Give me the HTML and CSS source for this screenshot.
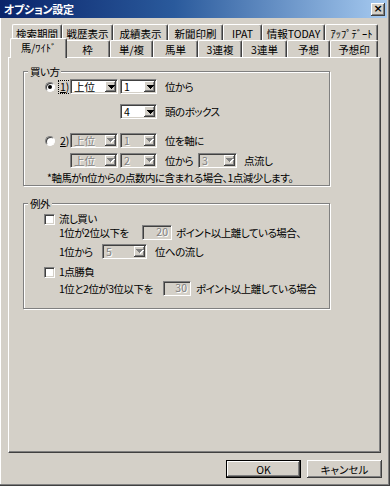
FILE: index.html
```html
<!DOCTYPE html>
<html lang="ja">
<head>
<meta charset="utf-8">
<title>オプション設定</title>
<link rel="stylesheet" href="styles.css">
</head>
<body>
<div class="window">
  <div class="titlebar">
    <span class="title">オプション設定</span>
    <span class="close">×</span>
  </div>

  <div class="tabs">
    <div class="tabrow back">
      <div class="tab">検索期間</div>
      <div class="tab">戦歴表示</div>
      <div class="tab">成績表示</div>
      <div class="tab">新聞印刷</div>
      <div class="tab">IPAT</div>
      <div class="tab">情報TODAY</div>
      <div class="tab">ｱｯﾌﾟﾃﾞｰﾄ</div>
    </div>
    <div class="tabrow front">
      <div class="tab sel">馬/ﾜｲﾄﾞ</div>
      <div class="tab">枠</div>
      <div class="tab">単/複</div>
      <div class="tab">馬単</div>
      <div class="tab">3連複</div>
      <div class="tab">3連単</div>
      <div class="tab">予想</div>
      <div class="tab">予想印</div>
    </div>
  </div>

  <div class="panel">
    <div class="group g1">
      <span class="legend">買い方</span>

      <div class="row r1">
        <div class="opt"><span class="radio on"></span><span class="olabel focus"><u>1</u>)</span></div>
        <span class="combo ca"><span class="val">上位</span><span class="dd"><svg width="7" height="4" viewBox="0 0 7 4" shape-rendering="crispEdges"><path d="M0 0h7v1h-1v1h-1v1h-1v1h-1v-1h-1v-1h-1v-1h-1z"/></svg></span></span>
        <span class="combo cb"><span class="val">1</span><span class="dd"><svg width="7" height="4" viewBox="0 0 7 4" shape-rendering="crispEdges"><path d="M0 0h7v1h-1v1h-1v1h-1v1h-1v-1h-1v-1h-1v-1h-1z"/></svg></span></span>
        <span class="txt after">位から</span>
      </div>

      <div class="row r2">
        <span class="combo cb"><span class="val">4</span><span class="dd"><svg width="7" height="4" viewBox="0 0 7 4" shape-rendering="crispEdges"><path d="M0 0h7v1h-1v1h-1v1h-1v1h-1v-1h-1v-1h-1v-1h-1z"/></svg></span></span>
        <span class="txt after">頭のボックス</span>
      </div>

      <div class="row r3">
        <div class="opt"><span class="radio"></span><span class="olabel"><u>2</u>)</span></div>
        <span class="combo ca dis"><span class="val">上位</span><span class="dd"><svg width="8" height="5" viewBox="0 0 8 5" shape-rendering="crispEdges"><path class="hl" d="M1 1h7v1h-1v1h-1v1h-1v1h-1v-1h-1v-1h-1v-1h-1z"/><path d="M0 0h7v1h-1v1h-1v1h-1v1h-1v-1h-1v-1h-1v-1h-1z"/></svg></span></span>
        <span class="combo cb dis"><span class="val">1</span><span class="dd"><svg width="8" height="5" viewBox="0 0 8 5" shape-rendering="crispEdges"><path class="hl" d="M1 1h7v1h-1v1h-1v1h-1v1h-1v-1h-1v-1h-1v-1h-1z"/><path d="M0 0h7v1h-1v1h-1v1h-1v1h-1v-1h-1v-1h-1v-1h-1z"/></svg></span></span>
        <span class="txt after">位を軸に</span>
      </div>

      <div class="row r4">
        <span class="combo ca dis"><span class="val">上位</span><span class="dd"><svg width="8" height="5" viewBox="0 0 8 5" shape-rendering="crispEdges"><path class="hl" d="M1 1h7v1h-1v1h-1v1h-1v1h-1v-1h-1v-1h-1v-1h-1z"/><path d="M0 0h7v1h-1v1h-1v1h-1v1h-1v-1h-1v-1h-1v-1h-1z"/></svg></span></span>
        <span class="combo cb dis"><span class="val">2</span><span class="dd"><svg width="8" height="5" viewBox="0 0 8 5" shape-rendering="crispEdges"><path class="hl" d="M1 1h7v1h-1v1h-1v1h-1v1h-1v-1h-1v-1h-1v-1h-1z"/><path d="M0 0h7v1h-1v1h-1v1h-1v1h-1v-1h-1v-1h-1v-1h-1z"/></svg></span></span>
        <span class="txt after w33">位から</span>
        <span class="combo cc dis"><span class="val">3</span><span class="dd"><svg width="8" height="5" viewBox="0 0 8 5" shape-rendering="crispEdges"><path class="hl" d="M1 1h7v1h-1v1h-1v1h-1v1h-1v-1h-1v-1h-1v-1h-1z"/><path d="M0 0h7v1h-1v1h-1v1h-1v1h-1v-1h-1v-1h-1v-1h-1z"/></svg></span></span>
        <span class="txt after7">点流し</span>
      </div>

      <div class="note">*軸馬がn位からの点数内に含まれる場合、1点減少します。</div>
    </div>

    <div class="group g2">
      <span class="legend">例外</span>

      <div class="crow c1">
        <span class="check"></span><span class="txt clabel">流し買い</span>
      </div>
      <div class="line l2">
        <span class="lab w83">1位が2位以下を</span>
        <span class="edit e30">20</span>
        <span class="txt after4">ポイント以上離している場合、</span>
      </div>
      <div class="line l3">
        <span class="lab w43">1位から</span>
        <span class="combo cd dis"><span class="val">5</span><span class="dd"><svg width="8" height="5" viewBox="0 0 8 5" shape-rendering="crispEdges"><path class="hl" d="M1 1h7v1h-1v1h-1v1h-1v1h-1v-1h-1v-1h-1v-1h-1z"/><path d="M0 0h7v1h-1v1h-1v1h-1v1h-1v-1h-1v-1h-1v-1h-1z"/></svg></span></span>
        <span class="txt after">位への流し</span>
      </div>
      <div class="crow c2">
        <span class="check"></span><span class="txt clabel">1点勝負</span>
      </div>
      <div class="line l5">
        <span class="lab w104">1位と2位が3位以下を</span>
        <span class="edit e28">30</span>
        <span class="txt after5">ポイント以上離している場合</span>
      </div>
    </div>
  </div>

  <div class="buttons">
    <div class="btn default">OK</div>
    <div class="btn">キャンセル</div>
  </div>
</div>
</body>
</html>
```

FILE: styles.css
```css
* { box-sizing: border-box; }
html, body { margin: 0; padding: 0; background: #d4d0c8; }
body {
  font-family: "Noto Sans CJK JP", "Noto Sans", sans-serif;
  font-size: 10.5px;
  line-height: 13px;
  letter-spacing: -0.5px;
  color: #000;
  font-feature-settings: "palt";
}

.window {
  width: 390px;
  height: 486px;
  background: #d4d0c8;
  box-shadow: inset -1px -1px 0 #404040, inset -2px -2px 0 #808080, inset 1px 0 0 #ffffff;
  display: flex;
  flex-direction: column;
  overflow: hidden;
}

/* title bar */
.titlebar {
  flex: none;
  width: 387px;
  height: 18px;
  background: linear-gradient(to right, #0a246a 0%, #2a5a9c 45%, #a6caf0 100%);
  display: flex;
  align-items: center;
  justify-content: space-between;
  padding: 0 2px 0 4px;
}
.title {
  color: #fff;
  font-weight: bold;
  font-size: 11px;
  line-height: 13px;
  letter-spacing: -0.3px;
}
.close {
  width: 14px;
  height: 13px;
  background: #d4d0c8;
  box-shadow: inset -1px -1px 0 #404040, inset 1px 1px 0 #ffffff, inset -2px -2px 0 #808080;
  display: flex;
  align-items: center;
  justify-content: center;
  font-family: "DejaVu Sans", sans-serif;
  font-size: 11px;
  font-weight: bold;
  line-height: 1;
  letter-spacing: 0;
  padding-bottom: 1px;
}

/* tabs */
.tabs {
  flex: none;
  margin: 6px 0 0 8px;
  width: 373px;
}
.tabrow {
  display: flex;
  padding-left: 4px;
}
.tabrow.back { height: 16px; }
.tabrow.front { height: 17px; align-items: flex-end; }

.tab {
  flex: none;
  height: 100%;
  display: flex;
  align-items: center;
  justify-content: center;
  background: #d4d0c8;
  border-top: 1px solid #fff;
  border-left: 1px solid #fff;
  border-right: 1px solid #404040;
  box-shadow: inset -1px 0 0 #808080;
  border-radius: 2px 2px 0 0;
  white-space: nowrap;
  padding-top: 1px;
  letter-spacing: 0;
}
.back .tab:nth-child(1) { width: 50px; }
.back .tab:nth-child(2) { width: 51px; }
.back .tab:nth-child(3) { width: 55px; }
.back .tab:nth-child(4) { width: 55px; }
.back .tab:nth-child(5) { width: 39px; }
.back .tab:nth-child(6) { width: 63px; }
.back .tab:nth-child(7) { width: 53px; }

.front .tab:nth-child(1) { width: 53px; }
.front .tab:nth-child(2) { width: 45px; }
.front .tab:nth-child(3) { width: 43px; }
.front .tab:nth-child(4) { width: 45px; }
.front .tab:nth-child(5) { width: 44px; }
.front .tab:nth-child(6) { width: 45px; }
.front .tab:nth-child(7) { width: 43px; }
.front .tab:nth-child(8) { width: 48px; }

.front .tab.sel {
  width: 57px;
  height: 20px;
  margin: 0 -2px -1px -2px;
  position: relative;
  z-index: 2;
  padding-top: 0;
  padding-bottom: 2px;
}

/* panel */
.panel {
  flex: none;
  margin-left: 8px;
  width: 373px;
  height: 396px;
  border-top: 1px solid #fff;
  border-left: 1px solid #fff;
  border-right: 1px solid #404040;
  border-bottom: 1px solid #404040;
  box-shadow: inset -1px -1px 0 #808080;
  padding: 13px 0 0 14px;
}

.group {
  position: relative;
  width: 307px;
  border: 1px solid #808080;
  box-shadow: 1px 1px 0 #fff, inset 1px 1px 0 #fff;
}
.g1 { height: 115px; }
.g2 { height: 106px; margin-top: 17px; }
.legend {
  position: absolute;
  top: -7px;
  left: 4px;
  padding: 0 2px;
  background: #d4d0c8;
  line-height: 13px;
}

.row {
  display: flex;
  align-items: center;
  height: 15px;
}
.r1 { margin-top: 7px; }
.r2 { margin-top: 10px; padding-left: 96px; }
.r3 { margin-top: 14px; }
.r4 { margin-top: 5px; padding-left: 46px; }

.opt {
  flex: none;
  width: 46px;
  display: flex;
  align-items: center;
  padding-left: 21px;
}
.olabel {
  margin-left: 3px;
  padding: 0 1px;
  line-height: 12px;
  border: 1px dotted transparent;
  letter-spacing: 0;
}
.olabel.focus { border-color: #000; }
.olabel u { text-decoration-thickness: 1px; text-underline-offset: 1px; }

.radio {
  flex: none;
  position: relative;
  width: 10px;
  height: 10px;
  border-radius: 50%;
  background: #fff;
  border: 1px solid;
  border-color: #808080 #fff #fff #808080;
  box-shadow: inset 1px 1px 0 #404040;
}
.radio.on::after {
  content: "";
  position: absolute;
  left: 2px;
  top: 2px;
  width: 4px;
  height: 4px;
  border-radius: 50%;
  background: #000;
}

.combo {
  flex: none;
  display: flex;
  align-items: stretch;
  height: 15px;
  background: #fff;
  border: 1px solid;
  border-color: #808080 #fff #fff #808080;
  box-shadow: inset 1px 1px 0 #404040, inset -1px -1px 0 #d4d0c8;
  padding: 1px;
}
.combo.ca { width: 48px; margin-right: 2px; }
.combo.cb { width: 37px; }
.combo.cc { width: 39px; }
.combo.cd { width: 45px; }
.combo .val {
  flex: 1;
  display: flex;
  align-items: center;
  padding-left: 2px;
  line-height: 11px;
  white-space: nowrap;
  letter-spacing: 0;
}
.combo .dd {
  flex: none;
  width: 11px;
  background: #d4d0c8;
  box-shadow: inset -1px -1px 0 #404040, inset 1px 1px 0 #ffffff, inset -2px -2px 0 #808080;
  display: flex;
  align-items: center;
  justify-content: center;
  padding-left: 1px;
}
.combo .dd svg { display: block; fill: #000; }
.combo.dis { background: #d4d0c8; }
.combo.dis .val { color: #808080; text-shadow: 1px 1px 0 #fff; }
.combo.dis .dd svg { fill: #808080; }
.combo.dis .dd svg .hl { fill: #fff; }

.txt { white-space: nowrap; }
.after { margin-left: 8px; }
.after4 { margin-left: 4px; }
.after5 { margin-left: 5px; }
.after7 { margin-left: 7px; }
.w33 { width: 33px; flex: none; }

.note {
  margin-top: 3px;
  padding-left: 23px;
  height: 14px;
  line-height: 14px;
  white-space: nowrap;
}

/* group 2 */
.crow {
  display: flex;
  align-items: center;
  height: 12px;
  line-height: 12px;
  padding-left: 20px;
}
.c1 { margin-top: 9px; }
.c2 { margin-top: 7px; }
.check {
  flex: none;
  width: 11px;
  height: 11px;
  background: #fff;
  border: 1px solid;
  border-color: #808080 #fff #fff #808080;
  box-shadow: inset 1px 1px 0 #404040, inset -1px -1px 0 #d4d0c8;
}
.clabel { margin-left: 4px; }

.line {
  display: flex;
  align-items: center;
  height: 15px;
  padding-left: 35px;
}
.l3 { margin-top: 4px; }
.l5 { margin-top: 3px; }
.lab { flex: none; white-space: nowrap; }
.w83 { width: 83px; }
.w43 { width: 43px; }
.w104 { width: 104px; }

.edit {
  flex: none;
  height: 15px;
  background: #d4d0c8;
  border: 1px solid;
  border-color: #808080 #fff #fff #808080;
  box-shadow: inset 1px 1px 0 #404040, inset -1px -1px 0 #d4d0c8;
  text-align: right;
  padding-right: 3px;
  line-height: 12px;
  color: #808080;
  text-shadow: 1px 1px 0 #fff;
  letter-spacing: 0;
}
.e30 { width: 30px; }
.e28 { width: 28px; }

/* buttons */
.buttons {
  flex: none;
  display: flex;
  justify-content: flex-end;
  gap: 6px;
  margin-top: 7px;
  width: 382px;
}
.btn {
  width: 75px;
  height: 18px;
  display: flex;
  align-items: center;
  justify-content: center;
  background: #d4d0c8;
  box-shadow: inset -1px -1px 0 #404040, inset 1px 1px 0 #ffffff, inset -2px -2px 0 #808080;
  line-height: 13px;
  letter-spacing: 0;
}
.btn.default {
  border: 1px solid #000;
}
```
